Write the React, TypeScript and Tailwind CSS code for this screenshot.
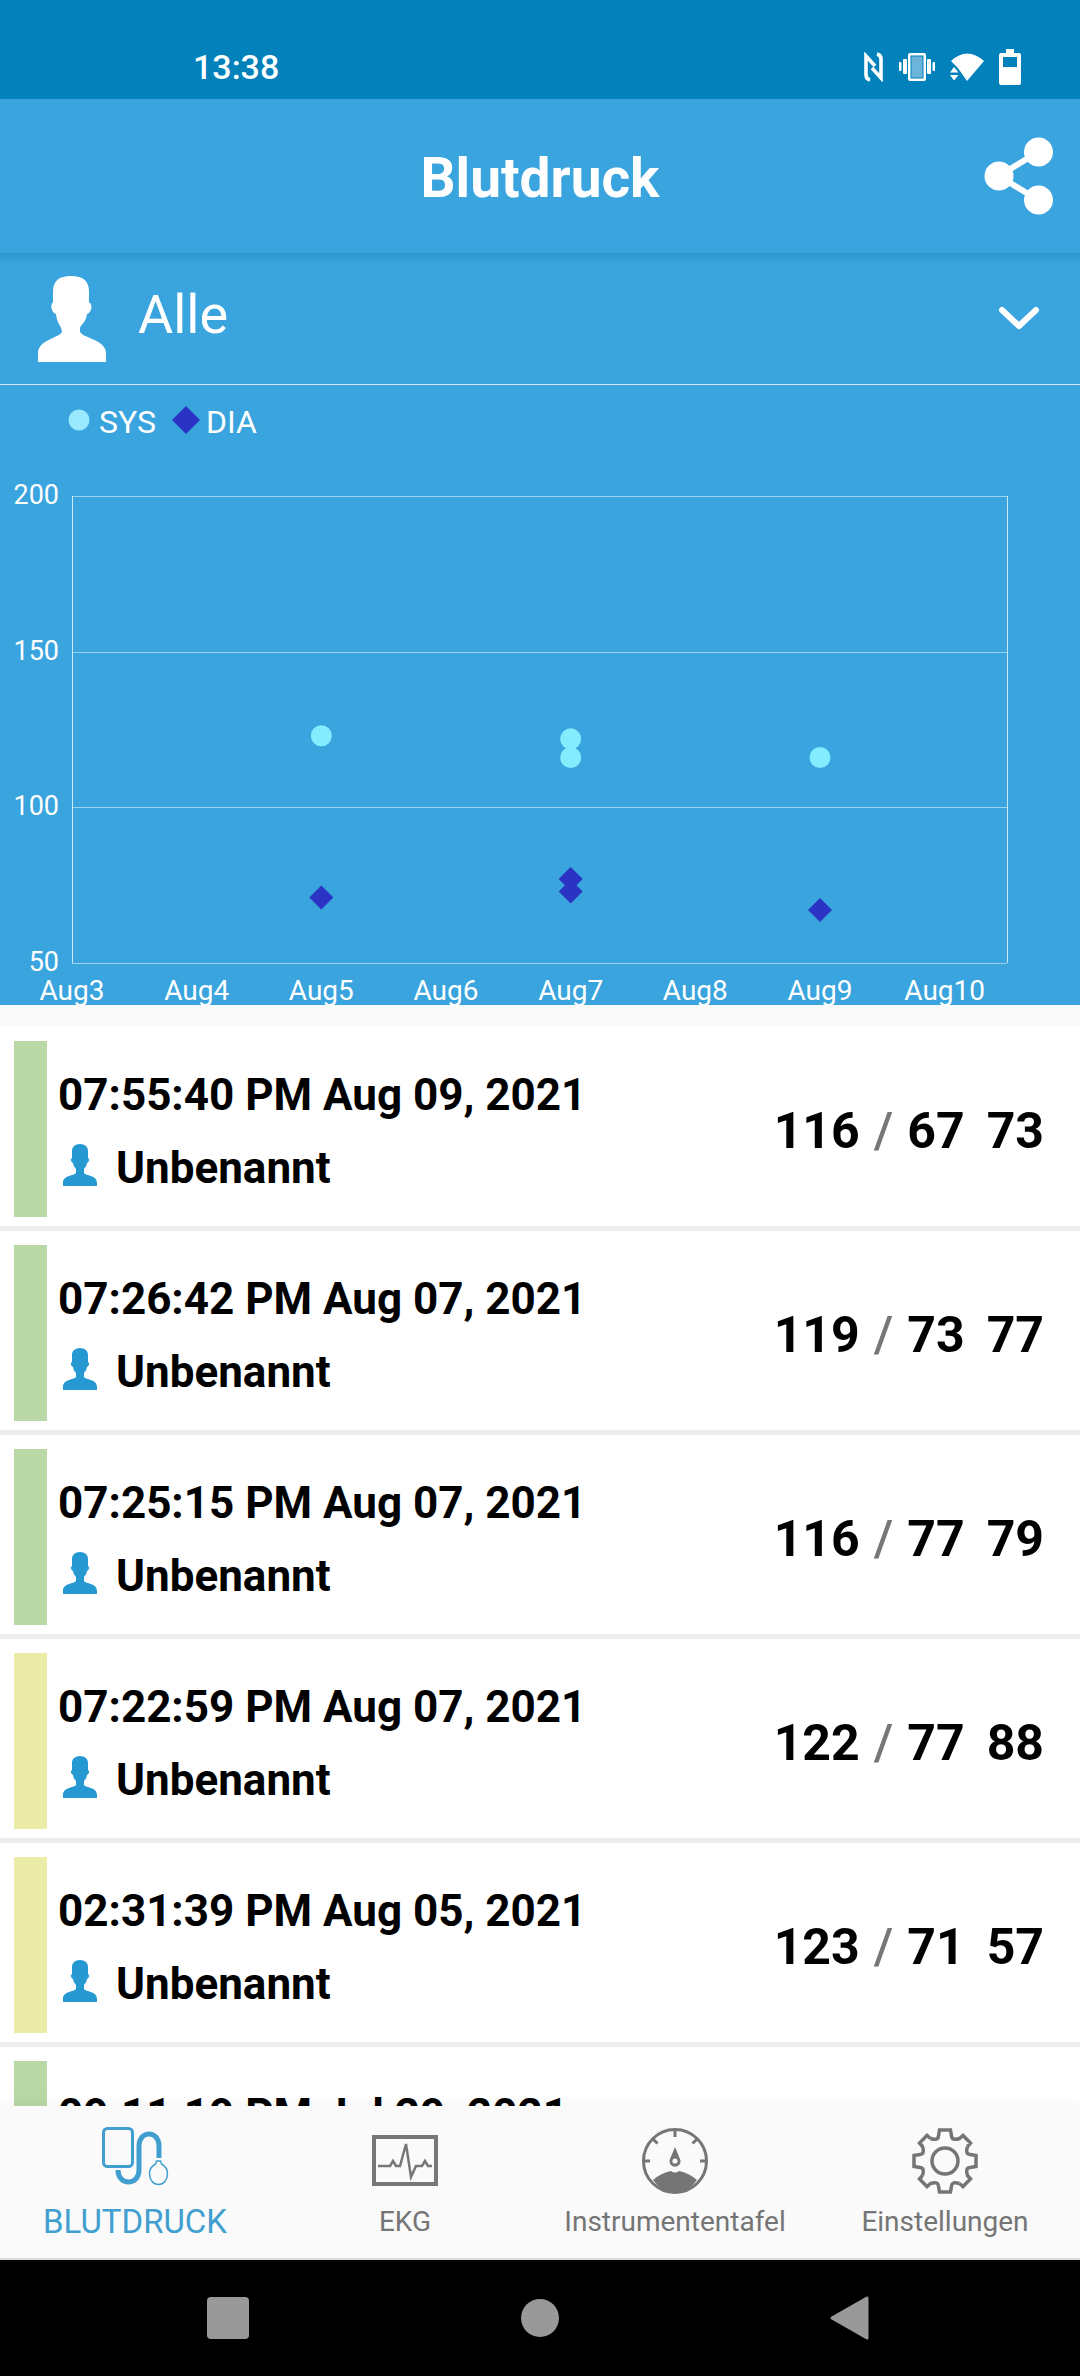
import React from "react";

function PersonLarge() {
  return (
    <svg width="68" height="86" viewBox="0 0 68 88" preserveAspectRatio="none" fill="#fff" aria-hidden="true">
      <path d="M33 0 C45 0 51 5 51 16 L51 27 C55 28 54 37 49 39 C48 47 44 49 42 53 L42 57 C44 63 67 65 68 78 L68 88 L0 88 L0 78 C1 65 22 63 24 57 L23 53 C21 49 19 47 18 39 C13 37 12 28 15 27 L15 16 C15 5 21 0 33 0 Z" />
    </svg>
  );
}

function PersonSmall() {
  return (
    <svg width="36" height="44" viewBox="0 0 36 44" fill="#2699d2" className="shrink-0" aria-hidden="true">
      <path d="M18 1 C23 1 26 4 26 8 L26 15 C28 16 27 19 25 20 C24.500 23 23 25 22 26 L22 30 C24 33 35 32 35 40 L35 43 L1 43 L1 40 C1 32 12 33 14 30 L14 26 C13 25 11.500 23 11 20 C9 19 8 16 10 15 L10 8 C10 4 13 1 18 1 Z" />
    </svg>
  );
}

function StatusBar() {
  return (
    <div className="flex h-[99px] shrink-0 items-center justify-between bg-[#0281bb] pt-[34px] pr-[59px] pl-[193px] text-white">
      <span className="text-[34px] leading-10 font-medium">13:38</span>
      <div className="flex items-center gap-[15px]">
        <svg width="20" height="30" viewBox="0 0 20 30" fill="none" stroke="#fff" strokeWidth="3.6" aria-hidden="true">
          <path d="M6 28 Q2 27 2 23 V4 L11 14 M13 2 Q17 3 17 7 V26 L8 16" />
        </svg>
        <svg width="36" height="30" viewBox="0 0 36 30" fill="#fff" aria-hidden="true">
          <rect x="0" y="10" width="2.500" height="9" rx="1" />
          <rect x="4" y="7" width="4" height="15" rx="1" />
          <rect x="28" y="7" width="4" height="15" rx="1" />
          <rect x="33.500" y="10" width="2.500" height="9" rx="1" />
          <rect x="9" y="1" width="18" height="28" rx="2" />
          <rect x="12" y="4" width="12" height="22" fill="#6cb4d9" stroke="#0281bb" strokeWidth="1" />
        </svg>
        <svg width="34" height="30" viewBox="0 0 34 30" fill="#fff" aria-hidden="true">
          <path d="M1 9 Q17 -6 34 9 L17 29 L10 19 L7 15 Z" />
          <path d="M4 15 L8.500 20.500 H0 Z M0 23 H8.500 L4 28.500 Z" />
        </svg>
        <svg width="22" height="36" viewBox="0 0 22 36" fill="#fff" aria-hidden="true">
          <path d="M7 0 H15 V4 H20 Q22 4 22 6 V34 Q22 36 20 36 H2 Q0 36 0 34 V6 Q0 4 2 4 H7 Z" />
          <rect x="4" y="8" width="14" height="10" fill="#0281bb" />
        </svg>
      </div>
    </div>
  );
}

function Header() {
  return (
    <header className="grid h-[154px] shrink-0 grid-cols-[1fr_auto_1fr] items-center bg-[#39a4dd] px-[26px] text-white">
      <h1 className="col-start-2 pt-1 text-[55px] leading-16 font-bold">Blutdruck</h1>
      <button type="button" aria-label="Teilen" className="justify-self-end">
        <svg width="70" height="78" viewBox="0 0 70 78" fill="#fff" stroke="#fff" aria-hidden="true">
          <path d="M54 15 L15 39 L54 63" fill="none" strokeWidth="6" />
          <circle cx="54.500" cy="15" r="14.500" stroke="none" />
          <circle cx="15" cy="39" r="14.500" stroke="none" />
          <circle cx="54.500" cy="63" r="14.500" stroke="none" />
        </svg>
      </button>
    </header>
  );
}

function UserPicker() {
  return (
    <button
      type="button"
      aria-haspopup="listbox"
      className="flex h-[132px] w-full shrink-0 items-center border-b border-white/80 bg-[#39a4dd] bg-linear-to-b from-[#2f95cd] to-[#39a4dd] to-[12px] pr-10 pl-[38px] text-left text-white"
    >
      <PersonLarge />
      <span className="grow pb-2 pl-8 text-[54px] leading-16">Alle</span>
      <svg width="42" height="26" viewBox="0 0 42 26" fill="none" stroke="#fff" strokeWidth="6" strokeLinecap="round" strokeLinejoin="round" aria-hidden="true">
        <path d="M4 4 L21 20 L38 4" />
      </svg>
    </button>
  );
}

const DAYS = ["Aug3", "Aug4", "Aug5", "Aug6", "Aug7", "Aug8", "Aug9", "Aug10"];
const TICKS = [200, 150, 100, 50];
const SYS = [[2, 123], [4, 122], [4, 116], [6, 116]];
const DIA = [[2, 71], [4, 77], [4, 73], [6, 67]];
const LEFT = 72;
const RIGHT = 1007;
const TOP = 111;
const BOTTOM = 578;
const px = (day: number) => LEFT + (day * (RIGHT - LEFT)) / 7.5;
const py = (v: number) => BOTTOM - ((v - 50) * (BOTTOM - TOP)) / 150;

function Chart() {
  return (
    <section aria-label="Verlauf" className="shrink-0 bg-[#39a4dd] text-white">
      <svg viewBox="0 0 1080 620" className="block w-full overflow-visible" fill="#fff">
        <circle cx="79" cy="35" r="10.500" fill="#9aeaff" />
        <text x="99" y="48" fontSize="32">SYS</text>
        <path d="M186 21 L200 35 L186 49 L172 35 Z" fill="#2b33c4" />
        <text x="206" y="48" fontSize="32">DIA</text>
        {TICKS.map((t) => (
          <g key={t}>
            <path d={`M${LEFT} ${Math.round(py(t)) + 0.5} H${RIGHT}`} stroke="#fff" strokeOpacity="0.5" />
            <text x="59" y={py(t) + 8} textAnchor="end" fontSize="27">{t}</text>
          </g>
        ))}
        <path d={`M${LEFT + 0.5} ${TOP} V${BOTTOM} M${RIGHT + 0.5} ${TOP} V${BOTTOM}`} stroke="#fff" strokeOpacity="0.75" />
        {DAYS.map((d, i) => (
          <text key={d} x={px(i)} y="615" textAnchor="middle" fontSize="28">{d}</text>
        ))}
        {SYS.map(([d, v]) => (
          <circle key={`${d}-${v}`} cx={px(d)} cy={py(v)} r="10.500" fill="#84ecff" />
        ))}
        {DIA.map(([d, v]) => (
          <path
            key={`${d}-${v}`}
            transform={`translate(${px(d)} ${py(v)})`}
            d="M0 -12 L12 0 L0 12 L-12 0 Z"
            fill="#2b33c4"
          />
        ))}
      </svg>
    </section>
  );
}

type Reading = { time: string; sys: number; dia: number; pulse: number; level: "green" | "yellow" };

const READINGS: Reading[] = [
  { time: "07:55:40 PM Aug 09, 2021", sys: 116, dia: 67, pulse: 73, level: "green" },
  { time: "07:26:42 PM Aug 07, 2021", sys: 119, dia: 73, pulse: 77, level: "green" },
  { time: "07:25:15 PM Aug 07, 2021", sys: 116, dia: 77, pulse: 79, level: "green" },
  { time: "07:22:59 PM Aug 07, 2021", sys: 122, dia: 77, pulse: 88, level: "yellow" },
  { time: "02:31:39 PM Aug 05, 2021", sys: 123, dia: 71, pulse: 57, level: "yellow" },
  { time: "09:11:19 PM Jul 29, 2021", sys: 118, dia: 74, pulse: 72, level: "green" },
];

function Row({ r }: { r: Reading }) {
  return (
    <li className="flex h-[204px] shrink-0 border-b-[5px] border-[#ededef] bg-white pt-[14px] pr-9 pb-[9px] pl-[14px] text-black">
      <div className={r.level === "green" ? "w-[33px] bg-[#b9d8a5]" : "w-[33px] bg-[#ebeca8]"} />
      <div className="flex grow flex-col pt-7 pl-[11px] font-bold">
        <span className="text-[44px] leading-[52px]">{r.time}</span>
        <span className="flex items-start gap-[18px] pt-[22px] pl-1">
          <PersonSmall />
          <span className="text-[44px] leading-[50px]">Unbenannt</span>
        </span>
      </div>
      <div className="flex items-center pt-1 text-[50px] leading-[60px] font-bold">
        <span>{r.sys}</span>
        <span className="px-[14px] font-medium text-[#777]">/</span>
        <span>{r.dia}</span>
        <span className="pl-[22px]">{r.pulse}</span>
      </div>
    </li>
  );
}

function CuffIcon() {
  return (
    <svg width="68" height="70" viewBox="0 0 68 70" fill="none" stroke="#419fd0" aria-hidden="true">
      <rect x="2.500" y="4.500" width="29" height="38" rx="4" strokeWidth="3" />
      <path d="M17 46 C17 62 38 62 38 46 V22 C38 6 58 6 58 22 V34" strokeWidth="5" />
      <path d="M55.500 37 H59.500 L60.500 40 C64 42 66.500 45 66.500 49.500 C66.500 56 62.500 60.500 57.500 60.500 C52.500 60.500 48.500 56 48.500 49.500 C48.500 45 51 42 54.500 40 Z" strokeWidth="1.500" />
    </svg>
  );
}

function EkgIcon() {
  return (
    <svg width="68" height="70" viewBox="0 0 68 70" fill="none" stroke="#777" aria-hidden="true">
      <rect x="3" y="13" width="62" height="47" strokeWidth="4" />
      <path d="M7 42 H19 L22 37 L25 42 H29 L35 20 L40 53 L45 42 H51 L54 37 L57 42 H61" strokeWidth="2.500" />
    </svg>
  );
}

function GaugeIcon() {
  return (
    <svg width="68" height="70" viewBox="0 -4 68 70" fill="none" stroke="#757575" aria-hidden="true">
      <path d="M12 52 Q20 45 30 43 Q34 46 38 43 Q48 45 56 52 Q47 65 34 65 Q21 65 12 52 Z" fill="#757575" stroke="none" />
      <circle cx="34" cy="33" r="31.500" strokeWidth="3" />
      <path d="M34 2 V9 M3 33 H9 M65 33 H59 M12 11 L16.500 15.500 M56 11 L51.500 15.500" strokeWidth="3" />
      <path d="M34 19 L39 31 A5.500 5.500 0 1 1 29 31 Z" fill="#757575" stroke="none" />
      <circle cx="34" cy="33" r="2.600" fill="#fafafa" stroke="none" />
    </svg>
  );
}

function GearIcon() {
  return (
    <svg width="68" height="70" viewBox="-34 -37 68 70" fill="none" stroke="#757575" strokeWidth="3.500" aria-hidden="true">
      {[0, 90, 180, 270].map((a) => (
        <path
          key={a}
          transform={`rotate(${a})`}
          d="M-14.500 -22.500 Q-7 -20 -6.500 -25 L-5.500 -31 H5.500 L6.500 -25 Q7 -20 14.500 -22.500 L18 -25.500 L25.500 -18 L22.500 -14.500"
        />
      ))}
      <circle r="13" />
    </svg>
  );
}

const TABS = [
  { label: "BLUTDRUCK", icon: <CuffIcon />, active: true },
  { label: "EKG", icon: <EkgIcon />, active: false },
  { label: "Instrumententafel", icon: <GaugeIcon />, active: false },
  { label: "Einstellungen", icon: <GearIcon />, active: false },
];

function TabBar() {
  return (
    <nav className="relative grid h-[154px] shrink-0 grid-cols-4 border-b-2 border-[#dcdcdc] bg-[#fafafa] shadow-[0_-4px_10px_rgba(0,0,0,0.04)]">
      {TABS.map((t) => (
        <button
          key={t.label}
          type="button"
          aria-current={t.active ? "page" : undefined}
          className="flex flex-col items-center gap-2 pt-[18px]"
        >
          {t.icon}
          <span className={t.active ? "text-[33px] leading-10 text-[#419fd0]" : "text-[28px] leading-10 text-[#757575]"}>
            {t.label}
          </span>
        </button>
      ))}
    </nav>
  );
}

function SystemNav() {
  return (
    <div className="grid h-[116px] shrink-0 grid-cols-[1fr_auto_1fr] items-center bg-black px-[207px]">
      <button type="button" aria-label="Letzte Apps" className="h-[42px] w-[42px] rounded bg-[#999]" />
      <button type="button" aria-label="Startseite" className="h-[38px] w-[38px] rounded-full bg-[#999]" />
      <button type="button" aria-label="Zurück" className="justify-self-end">
        <svg width="44" height="46" viewBox="0 0 44 46" aria-hidden="true">
          <path d="M3 23 L38 3 V43 Z" fill="#999" stroke="#999" strokeWidth="3" strokeLinejoin="round" />
        </svg>
      </button>
    </div>
  );
}

export default function App() {
  return (
    <div className="flex h-screen flex-col bg-[#fafafa] font-[Roboto,sans-serif]">
      <StatusBar />
      <Header />
      <UserPicker />
      <Chart />
      <ul className="flex min-h-0 grow flex-col overflow-hidden pt-[22px]">
        {READINGS.map((r) => (
          <Row key={r.time} r={r} />
        ))}
      </ul>
      <TabBar />
      <SystemNav />
    </div>
  );
}
